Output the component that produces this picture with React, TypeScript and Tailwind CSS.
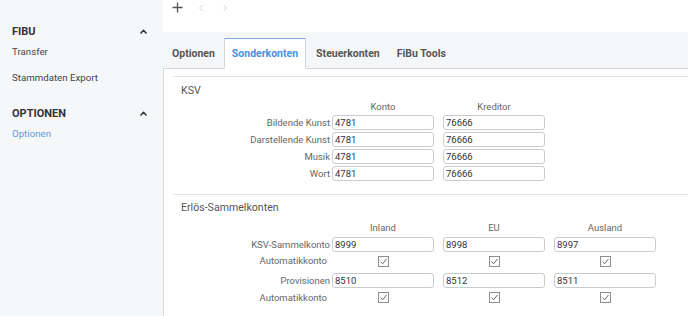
import React from "react";

const Caret = () => (
  <svg width="7" height="5" viewBox="0 0 7 5" className="block">
    <path d="M1 4 L3.5 1.3 L6 4" fill="none" stroke="#333" strokeWidth="1.6" strokeLinecap="round" strokeLinejoin="round" />
  </svg>
);

const Check = () => (
  <span className="flex h-[11px] w-[11px] items-center justify-center border border-[#8e8e8e] bg-white">
    <svg width="9" height="9" viewBox="0 0 9 9" className="block">
      <path d="M1.5 4.6 L3.6 6.8 L7.6 1.8" fill="none" stroke="#6a6a6a" strokeWidth="1" />
    </svg>
  </span>
);

const Field = ({ v, first }: { v: string; first?: boolean }) => (
  <input
    readOnly
    value={v}
    className={
      "h-[15px] w-[102px] rounded-[3px] border border-[#c9cdd2] bg-white px-[2px] text-[9.5px] leading-none text-[#333] outline-none " +
      (first ? "" : "ml-[9px]")
    }
  />
);

const Label = ({ t, pr }: { t: string; pr?: boolean }) => (
  <div className={"w-[159px] shrink-0 text-right text-[9.5px] leading-none text-[#666] " + (pr ? "pr-[5px]" : "pr-[2px]")}>{t}</div>
);

const Header = ({ cols }: { cols: string[] }) => (
  <div className="flex h-[13px] items-center">
    <div className="w-[159px] shrink-0" />
    {cols.map((c, i) => (
      <div key={c} className={"w-[102px] text-center text-[9.5px] leading-none text-[#666] " + (i ? "ml-[9px]" : "")}>
        {c}
      </div>
    ))}
  </div>
);

export default function App() {
  const ksv = ["Bildende Kunst", "Darstellende Kunst", "Musik", "Wort"];
  return (
    <div className="flex h-[316px] w-[688px] overflow-hidden bg-white font-['Roboto',sans-serif]">
      {/* Sidebar */}
      <div className="w-[163px] shrink-0 bg-[#f6f7f9] pt-[24px]">
        <div className="flex h-[14px] items-center justify-between pl-[12px] pr-[16px]">
          <span className="text-[11px] font-bold leading-none text-[#333]">FIBU</span>
          <Caret />
        </div>
        <div className="mt-px flex h-[26px] items-center pl-[12px] text-[9.7px] text-[#444]">Transfer</div>
        <div className="flex h-[26px] items-center pl-[12px] text-[9.7px] text-[#444]">Stammdaten Export</div>
        <div className="mt-[15px] flex h-[14px] items-center justify-between pl-[12px] pr-[16px]">
          <span className="text-[11px] font-bold leading-none text-[#333]">OPTIONEN</span>
          <Caret />
        </div>
        <div className="mt-px flex h-[26px] items-center pl-[12px] text-[9.7px] text-[#5b9be6]">Optionen</div>
      </div>

      {/* Main */}
      <div className="flex min-w-0 flex-1 flex-col">
        {/* Toolbar */}
        <div className="flex h-[32px] items-start bg-white pl-[9px] pt-[1px]">
          <svg width="11" height="11" viewBox="0 0 11 11" className="mt-px block">
            <path d="M5.5 0.5 V10.5 M0.5 5.5 H10.5" stroke="#555" strokeWidth="1.3" />
          </svg>
          <svg width="6" height="8" viewBox="0 0 6 8" className="ml-[15px] mt-[3px] block">
            <path d="M4.5 1 L1.5 4 L4.5 7" fill="none" stroke="#cfcfcf" strokeWidth="1" />
          </svg>
          <svg width="6" height="8" viewBox="0 0 6 8" className="ml-[18px] mt-[3px] block">
            <path d="M1.5 1 L4.5 4 L1.5 7" fill="none" stroke="#cfcfcf" strokeWidth="1" />
          </svg>
        </div>

        {/* Tab bar */}
        <div className="flex h-[37px] items-end border-b border-[#d3d6da] bg-[#f5f6f8]">
          <div className="-mb-px flex h-[31px] items-center border border-transparent px-[8px] text-[10.5px] font-bold text-[#555]">Optionen</div>
          <div className="-mb-px flex h-[31px] items-center border border-[#d3d6da] border-t-[#7eaae6] border-b-white bg-white px-[7px] text-[10.5px] font-bold text-[#4a8fe2]">
            Sonderkonten
          </div>
          <div className="-mb-px flex h-[31px] items-center border border-transparent px-[9px] text-[10.5px] font-bold text-[#555]">Steuerkonten</div>
          <div className="-mb-px flex h-[31px] items-center border border-transparent px-[6px] text-[10.5px] font-bold text-[#555]">FiBu Tools</div>
        </div>

        {/* Content */}
        <div className="flex-1 border-l border-[#d3d6da] bg-white pl-[9px] pt-[7px]">
          {/* KSV */}
          <div className="border-t border-[#e3e5e8]">
            <div className="pl-[8px] pt-[7px] text-[10.6px] leading-[13px] text-[#555]">KSV</div>
            <div className="mt-[3px]">
              <Header cols={["Konto", "Kreditor"]} />
            </div>
            <div className="mt-[2px] flex flex-col gap-[2px]">
              {ksv.map((l) => (
                <div key={l} className="flex h-[15px] items-center">
                  <Label t={l} />
                  <Field v="4781" first />
                  <Field v="76666" />
                </div>
              ))}
            </div>
          </div>

          {/* Erlös-Sammelkonten */}
          <div className="mt-[13px] border-t border-[#e3e5e8]">
            <div className="pl-[8px] pt-[6px] text-[10.6px] leading-[13px] text-[#555]">Erlös-Sammelkonten</div>
            <div className="mt-[7px]">
              <Header cols={["Inland", "EU", "Ausland"]} />
            </div>
            <div className="mt-[3px] flex h-[15px] items-center">
              <Label t="KSV-Sammelkonto" />
              <Field v="8999" first />
              <Field v="8998" />
              <Field v="8997" />
            </div>
            <div className="flex h-[18px] items-center">
              <Label t="Automatikkonto" pr />
              {[0, 1, 2].map((i) => (
                <div key={i} className={"flex w-[102px] justify-center " + (i ? "ml-[9px]" : "")}>
                  <Check />
                </div>
              ))}
            </div>
            <div className="mt-[3px] flex h-[15px] items-center">
              <Label t="Provisionen" />
              <Field v="8510" first />
              <Field v="8512" />
              <Field v="8511" />
            </div>
            <div className="flex h-[19px] items-center">
              <Label t="Automatikkonto" pr />
              {[0, 1, 2].map((i) => (
                <div key={i} className={"flex w-[102px] justify-center " + (i ? "ml-[9px]" : "")}>
                  <Check />
                </div>
              ))}
            </div>
          </div>
        </div>
      </div>
    </div>
  );
}
